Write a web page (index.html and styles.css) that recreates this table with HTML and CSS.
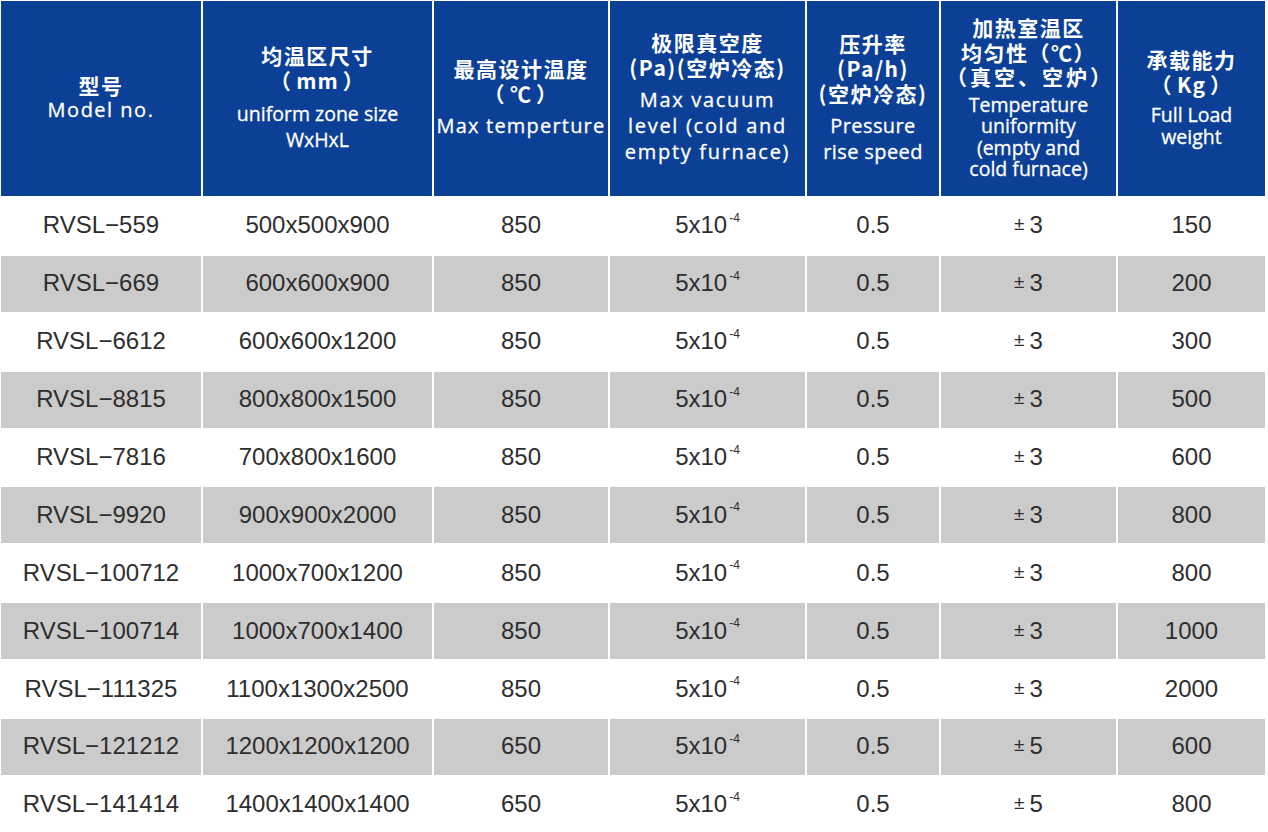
FILE: index.html
```html
<!DOCTYPE html>
<html lang="zh">
<head>
<meta charset="utf-8">
<title>RVSL</title>
<link rel="stylesheet" href="styles.css">
</head>
<body>
<div class="table">
  <div class="row head">
    <div class="hc c1"><div class="cn">型号</div><div class="en">Model no.</div></div>
    <div class="hc c2"><div class="cn">均温区尺寸</div><div class="cn">（<span class="in">mm</span>）</div><div class="en gap">uniform zone size</div><div class="en">WxHxL</div></div>
    <div class="hc c3"><div class="cn">最高设计温度</div><div class="cn">（<span class="in">℃</span>）</div><div class="en gap">Max temperture</div></div>
    <div class="hc c4"><div class="cn">极限真空度</div><div class="cn">(Pa)(空炉冷态)</div><div class="en gap">Max vacuum</div><div class="en">level (cold and</div><div class="en">empty furnace)</div></div>
    <div class="hc c5"><div class="cn">压升率</div><div class="cn">(Pa/h)</div><div class="cn">(空炉冷态)</div><div class="en gap">Pressure</div><div class="en">rise speed</div></div>
    <div class="hc c6"><div class="cn">加热室温区</div><div class="cn">均匀性（℃）</div><div class="cn wide2">（真空、空炉）</div><div class="en gap">Temperature</div><div class="en">uniformity</div><div class="en">(empty and</div><div class="en">cold furnace)</div></div>
    <div class="hc c7"><div class="cn">承载能力</div><div class="cn">（<span class="in">Kg</span>）</div><div class="en gap">Full Load</div><div class="en">weight</div></div>
  </div>

  <div class="row">
    <div class="bc">RVSL−559</div><div class="bc">500x500x900</div><div class="bc">850</div><div class="bc">5x10<span class="sup">-4</span></div><div class="bc">0.5</div><div class="bc"><span class="pm">±</span>3</div><div class="bc">150</div>
  </div>
  <div class="row alt">
    <div class="bc">RVSL−669</div><div class="bc">600x600x900</div><div class="bc">850</div><div class="bc">5x10<span class="sup">-4</span></div><div class="bc">0.5</div><div class="bc"><span class="pm">±</span>3</div><div class="bc">200</div>
  </div>
  <div class="row">
    <div class="bc">RVSL−6612</div><div class="bc">600x600x1200</div><div class="bc">850</div><div class="bc">5x10<span class="sup">-4</span></div><div class="bc">0.5</div><div class="bc"><span class="pm">±</span>3</div><div class="bc">300</div>
  </div>
  <div class="row alt">
    <div class="bc">RVSL−8815</div><div class="bc">800x800x1500</div><div class="bc">850</div><div class="bc">5x10<span class="sup">-4</span></div><div class="bc">0.5</div><div class="bc"><span class="pm">±</span>3</div><div class="bc">500</div>
  </div>
  <div class="row">
    <div class="bc">RVSL−7816</div><div class="bc">700x800x1600</div><div class="bc">850</div><div class="bc">5x10<span class="sup">-4</span></div><div class="bc">0.5</div><div class="bc"><span class="pm">±</span>3</div><div class="bc">600</div>
  </div>
  <div class="row alt">
    <div class="bc">RVSL−9920</div><div class="bc">900x900x2000</div><div class="bc">850</div><div class="bc">5x10<span class="sup">-4</span></div><div class="bc">0.5</div><div class="bc"><span class="pm">±</span>3</div><div class="bc">800</div>
  </div>
  <div class="row">
    <div class="bc">RVSL−100712</div><div class="bc">1000x700x1200</div><div class="bc">850</div><div class="bc">5x10<span class="sup">-4</span></div><div class="bc">0.5</div><div class="bc"><span class="pm">±</span>3</div><div class="bc">800</div>
  </div>
  <div class="row alt">
    <div class="bc">RVSL−100714</div><div class="bc">1000x700x1400</div><div class="bc">850</div><div class="bc">5x10<span class="sup">-4</span></div><div class="bc">0.5</div><div class="bc"><span class="pm">±</span>3</div><div class="bc">1000</div>
  </div>
  <div class="row">
    <div class="bc">RVSL−111325</div><div class="bc">1100x1300x2500</div><div class="bc">850</div><div class="bc">5x10<span class="sup">-4</span></div><div class="bc">0.5</div><div class="bc"><span class="pm">±</span>3</div><div class="bc">2000</div>
  </div>
  <div class="row alt">
    <div class="bc">RVSL−121212</div><div class="bc">1200x1200x1200</div><div class="bc">650</div><div class="bc">5x10<span class="sup">-4</span></div><div class="bc">0.5</div><div class="bc"><span class="pm">±</span>5</div><div class="bc">600</div>
  </div>
  <div class="row">
    <div class="bc">RVSL−141414</div><div class="bc">1400x1400x1400</div><div class="bc">650</div><div class="bc">5x10<span class="sup">-4</span></div><div class="bc">0.5</div><div class="bc"><span class="pm">±</span>5</div><div class="bc">800</div>
  </div>
</div>
</body>
</html>
```

FILE: styles.css
```css
html, body {
  margin: 0;
  padding: 0;
  background: #ffffff;
}

.table {
  display: grid;
  grid-template-columns: 200px 229px 174px 195px 132px 175px 147px;
  grid-template-rows: 195px repeat(11, 55.9px);
  column-gap: 2px;
  row-gap: 2px;
  margin: 1px 0 0 1px;
  width: 1264px;
  background: #ffffff;
}

.row {
  display: contents;
}

.hc {
  background: #0c4096;
  color: #ffffff;
  display: flex;
  flex-direction: column;
  align-items: center;
  justify-content: center;
  text-align: center;
  padding-bottom: 2px;
}

.cn {
  font-family: "Noto Sans CJK SC", "Noto Sans", sans-serif;
  font-weight: 700;
  font-size: 21px;
  letter-spacing: 1.5px;
  line-height: 25px;
  white-space: nowrap;
}

.cn .in {
  margin: 0 4px;
  letter-spacing: 1px;
}

.cn.wide2 {
  letter-spacing: 3px;
  padding-left: 3px;
}

.en {
  font-family: "Open Sans", "Liberation Sans", sans-serif;
  font-size: 20px;
  line-height: 26px;
  letter-spacing: 1.5px;
  white-space: nowrap;
  -webkit-text-stroke: 0.3px #ffffff;
}

.en.gap {
  margin-top: 7px;
}

.c1 .cn { line-height: 24px; }
.c1 .en { letter-spacing: 1.5px; }
.c2 .en { letter-spacing: 0; font-size: 19.5px; }
.c2 .en.gap { margin-top: 8px; }
.c3 .en { letter-spacing: 1.2px; }
.c4 .en { letter-spacing: 1.7px; }
.c5 .en { letter-spacing: 0.4px; }
.c6 .cn { line-height: 24.5px; }
.c6 .en { letter-spacing: 0; line-height: 21.5px; font-size: 19.5px; }
.c6 .en.gap { margin-top: 5px; }
.c7 .en { letter-spacing: 0; line-height: 22px; font-size: 19.5px; }

.bc {
  background: #ffffff;
  color: #2e2e2e;
  font-family: "Liberation Sans", Arial, sans-serif;
  font-size: 24px;
  display: flex;
  align-items: center;
  justify-content: center;
  white-space: nowrap;
  padding-bottom: 1px;
}

.row.alt .bc {
  background: #cbcbcb;
}

.sup {
  font-size: 12px;
  align-self: flex-start;
  margin-top: 13px;
  margin-left: 2px;
}

.pm {
  font-size: 19px;
  margin-right: 5px;
  position: relative;
  top: -1px;
}
```
